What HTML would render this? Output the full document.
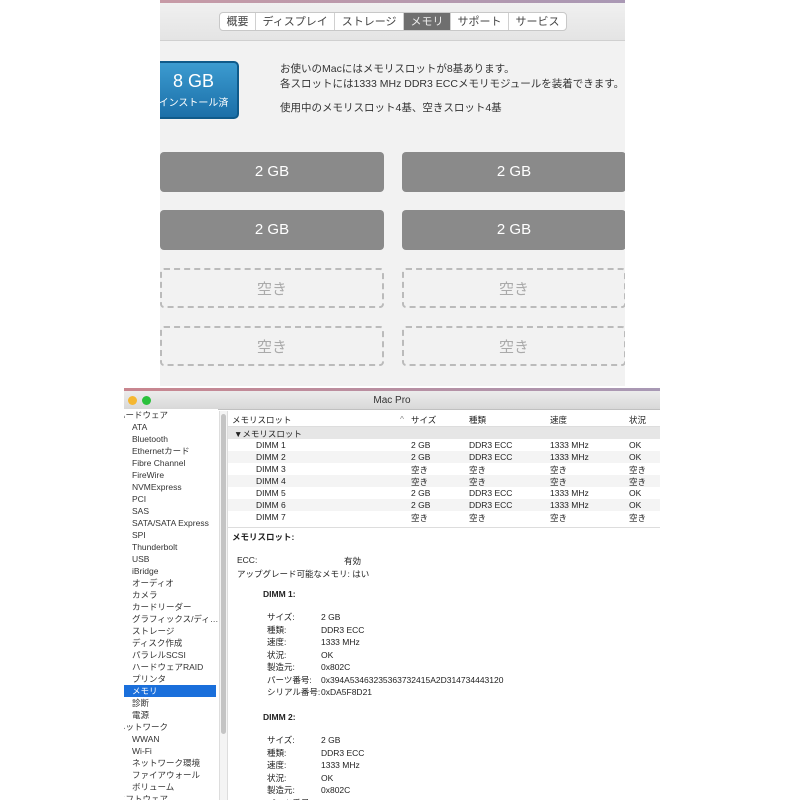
<!DOCTYPE html>
<html><head><meta charset="utf-8"><style>
*{margin:0;padding:0;box-sizing:border-box}
body{width:800px;height:800px;background:#fff;position:relative;overflow:hidden;font-family:"Liberation Sans","Noto Sans CJK JP",sans-serif;color:#222}
.a{position:absolute;white-space:nowrap}
#top{position:absolute;left:160px;top:0;width:465px;height:386px;background:#f2f2f2;overflow:hidden}
.tabs{position:absolute;left:59px;top:12px;height:19px;display:flex;border:1px solid #c8c8c8;border-radius:4px;background:#fff;font-size:11px;color:#444}
.tabs div{padding:2px 6.5px;border-right:1px solid #d0d0d0;line-height:14px}
.tabs .on{background:#6f6f6f;color:#eee}
.slot{position:absolute;width:224px;height:40px;border-radius:4px;font-size:15px;text-align:center;line-height:40px}
.full{background:#8a8a8a;color:#fff}
.empty{border:2px dashed #bbb;color:#aaa;background:#f2f2f2}
.sb{font-size:8.5px;line-height:12px;color:#333;overflow:hidden;white-space:nowrap}
.t{font-size:8.5px;color:#222}
</style></head><body>
<div id="top">
<div style="position:absolute;left:0;top:0;width:465px;height:3px;background:linear-gradient(90deg,#c79aa6,#a998b4)"></div>
<div style="position:absolute;left:0;top:3px;width:465px;height:38px;background:linear-gradient(#f0f0f0,#e4e4e4);border-bottom:1px solid #d0d0d0"></div>
<div class="tabs"><div>概要</div><div>ディスプレイ</div><div>ストレージ</div><div class="on">メモリ</div><div>サポート</div><div style="border:none">サービス</div></div>
<div style="position:absolute;left:-12px;top:61px;width:91px;height:58px;border-radius:5px;background:linear-gradient(#3c9bd0,#1b6fa8);border:2px solid #0f5a8a;color:#fff;text-align:center">
<div style="font-size:18px;margin-top:8px">8 GB</div><div style="font-size:10px;margin-top:2px">インストール済</div></div>
<div class="a" style="left:120px;top:62px;font-size:10.5px;line-height:15px;color:#333">お使いのMacにはメモリスロットが8基あります。<br>各スロットには1333 MHz DDR3 ECCメモリモジュールを装着できます。</div>
<div class="a" style="left:120px;top:100px;font-size:10.5px;color:#333">使用中のメモリスロット4基、空きスロット4基</div>
<div class="slot full" style="left:0;top:152px">2 GB</div><div class="slot full" style="left:242px;top:152px">2 GB</div>
<div class="slot full" style="left:0;top:210px">2 GB</div><div class="slot full" style="left:242px;top:210px">2 GB</div>
<div class="slot empty" style="left:0;top:268px">空き</div><div class="slot empty" style="left:242px;top:268px">空き</div>
<div class="slot empty" style="left:0;top:326px">空き</div><div class="slot empty" style="left:242px;top:326px">空き</div>
</div>

<div style="position:absolute;left:124px;top:388px;width:536px;height:412px;background:#fff;overflow:hidden">
<div style="height:3px;background:linear-gradient(90deg,#c9868f,#a899b5)"></div>
<div style="height:19px;background:linear-gradient(#ececec,#d8d8d8);border-bottom:1px solid #c0c0c0;text-align:center;font-size:10px;line-height:19px;color:#333">Mac Pro</div>
<div style="position:absolute;left:4px;top:8px;width:9px;height:9px;border-radius:50%;background:#f5b731"></div>
<div style="position:absolute;left:18px;top:8px;width:9px;height:9px;border-radius:50%;background:#2bc13c"></div>
<div style="position:absolute;left:0;top:21px;width:94px;height:391px;background:#fff" class="sb">
<div style="margin-left:-7px">ハードウェア</div>
<div style="padding-left:8px">ATA<br>Bluetooth<br>Ethernetカード<br>Fibre Channel<br>FireWire<br>NVMExpress<br>PCI<br>SAS<br>SATA/SATA Express<br>SPI<br>Thunderbolt<br>USB<br>iBridge<br>オーディオ<br>カメラ<br>カードリーダー<br>グラフィックス/ディ…<br>ストレージ<br>ディスク作成<br>パラレルSCSI<br>ハードウェアRAID<br>プリンタ</div>
<div style="padding-left:8px;background:#1a6fdb;color:#fff;width:92px">メモリ</div>
<div style="padding-left:8px">診断<br>電源</div><div style="margin-left:-7px">ネットワーク</div>
<div style="padding-left:8px">WWAN<br>Wi-Fi<br>ネットワーク環境<br>ファイアウォール<br>ボリューム</div><div style="margin-left:-7px">ソフトウェア</div>
</div>
<div style="position:absolute;left:95px;top:23px;width:9px;height:389px;background:#f4f4f4;border-left:1px solid #ddd;border-right:1px solid #ddd"><div style="margin:3px 1px;width:5px;height:320px;border-radius:3px;background:#c4c4c4"></div></div>
<div style="position:absolute;left:104px;top:23px;width:432px;height:389px" class="t">
<div style="height:16px;border-bottom:1px solid #ddd;position:relative"><span class="a" style="left:4px;top:3px">メモリスロット</span><span class="a" style="left:172px;top:3px;color:#888">^</span><span class="a" style="left:183px;top:3px">サイズ</span><span class="a" style="left:241px;top:3px">種類</span><span class="a" style="left:322px;top:3px">速度</span><span class="a" style="left:401px;top:3px">状況</span></div>
<div style="height:12px;background:#e6e6e6;position:relative"><span class="a" style="left:6px;top:1px">▼メモリスロット</span></div>
<div id="rows"></div>
<div style="position:relative;height:5px;border-bottom:1px solid #ddd"></div>
<div style="position:relative;font-size:8.5px">
<div class="a" style="left:4px;top:3px;font-weight:bold">メモリスロット:</div>
<div class="a" style="left:9px;top:27px">ECC:</div><div class="a" style="left:116px;top:27px">有効</div>
<div class="a" style="left:9px;top:40px">アップグレード可能なメモリ: はい</div>
<div class="a" style="left:35px;top:61px;font-weight:bold">DIMM 1:</div>
<div class="a" style="left:39px;top:83px;line-height:12.5px">サイズ:<br>種類:<br>速度:<br>状況:<br>製造元:<br>パーツ番号:<br>シリアル番号:</div>
<div class="a" style="left:93px;top:83px;line-height:12.5px">2 GB<br>DDR3 ECC<br>1333 MHz<br>OK<br>0x802C<br>0x394A53463235363732415A2D314734443120<br>0xDA5F8D21</div>
<div class="a" style="left:35px;top:184px;font-weight:bold">DIMM 2:</div>
<div class="a" style="left:39px;top:206px;line-height:12.5px">サイズ:<br>種類:<br>速度:<br>状況:<br>製造元:<br>パーツ番号:</div>
<div class="a" style="left:93px;top:206px;line-height:12.5px">2 GB<br>DDR3 ECC<br>1333 MHz<br>OK<br>0x802C<br>0x394A53463235363732415A2D314734443120</div>
</div>
</div>
</div>
<script>
var d=[["DIMM 1",1],["DIMM 2",1],["DIMM 3",0],["DIMM 4",0],["DIMM 5",1],["DIMM 6",1],["DIMM 7",0]],h="";
d.forEach(function(r,i){var f=r[1];h+='<div style="height:12px;position:relative;background:'+(i%2?'#f4f4f4':'#fff')+'"><span class="a" style="left:28px;top:1px">'+r[0]+'</span><span class="a" style="left:183px;top:1px">'+(f?'2 GB':'空き')+'</span><span class="a" style="left:241px;top:1px">'+(f?'DDR3 ECC':'空き')+'</span><span class="a" style="left:322px;top:1px">'+(f?'1333 MHz':'空き')+'</span><span class="a" style="left:401px;top:1px">'+(f?'OK':'空き')+'</span></div>';});
document.getElementById('rows').innerHTML=h;
</script>
</body></html>
